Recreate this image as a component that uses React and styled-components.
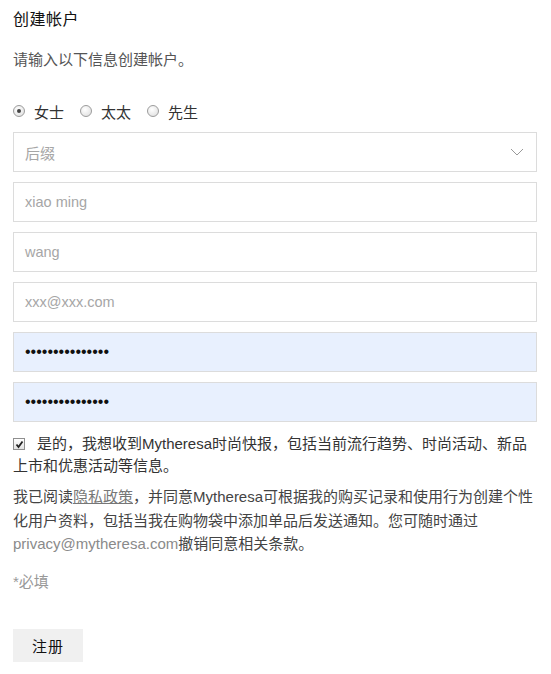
import React, { useState } from 'react';
import styled, { createGlobalStyle } from 'styled-components';

const GlobalStyle = createGlobalStyle`
  body {
    margin: 0;
    background: #fff;
    font-family: "Liberation Sans", "Noto Sans CJK SC", sans-serif;
    color: #333;
  }
`;

const Page = styled.div`
  width: 524px;
  padding: 10px 13px 12px 13px;
`;

const Title = styled.h2`
  margin: 0;
  font-size: 16px;
  font-weight: normal;
  color: #111;
  line-height: 20px;
  letter-spacing: 0.5px;
`;

const Intro = styled.p`
  margin: 20px 0 0;
  font-size: 15px;
  color: #555;
  line-height: 20px;
`;

const RadioRow = styled.div`
  display: flex;
  align-items: center;
  gap: 16px;
  margin-top: 31px;
  height: 20px;
`;

const RadioLabel = styled.label`
  display: flex;
  align-items: center;
  gap: 9px;
  font-size: 15px;
  color: #333;
  cursor: pointer;
`;

const RadioDot = styled.span`
  box-sizing: border-box;
  width: 12px;
  height: 12px;
  border-radius: 50%;
  border: 1px solid #9c9c9c;
  background: radial-gradient(circle at 40% 35%, #fff 0%, #dcdcdc 100%);
  display: flex;
  align-items: center;
  justify-content: center;
  &::after {
    content: '';
    width: 4px;
    height: 4px;
    border-radius: 50%;
    background: ${(p) => (p.$checked ? '#444' : 'transparent')};
  }
`;

const Fields = styled.div`
  display: flex;
  flex-direction: column;
  gap: 10px;
  margin-top: 11px;
`;

const Field = styled.div`
  height: 38px;
  border: 1px solid #dcdcdc;
  background: ${(p) => (p.$filled ? '#e8f0fe' : '#fff')};
  display: flex;
  align-items: center;
  justify-content: space-between;
  padding: 0 12px 0 11px;
  font-size: 14.5px;
  color: #a6a6a6;
`;

const CjkPlaceholder = styled.span`
  font-size: 15px;
`;

const Dots = styled.span`
  font-size: 16px;
  color: #111;
`;

const ConsentRow = styled.div`
  margin-top: 11px;
  font-size: 15px;
  line-height: 22px;
  color: #333;
`;

const CheckBox = styled.span`
  box-sizing: border-box;
  display: inline-flex;
  align-items: center;
  justify-content: center;
  vertical-align: top;
  width: 12px;
  height: 12px;
  margin: 5px 12px 0 0;
  border: 1px solid #8f8f8f;
  background: linear-gradient(#fff, #e2e2e2);
`;

const Legal = styled.p`
  margin: 8px 0 0;
  font-size: 15px;
  line-height: 23.5px;
  color: #444;
`;

const Link = styled.a`
  color: #777;
  text-decoration: underline;
`;

const Mail = styled.span`
  color: #8a8a8a;
  white-space: nowrap;
`;

const Required = styled.p`
  margin: 16px 0 0;
  font-size: 15px;
  color: #999;
  line-height: 20px;
`;

const SubmitButton = styled.button`
  display: block;
  margin-top: 37px;
  width: 70px;
  height: 33px;
  border: none;
  background: #f0f0f0;
  font-family: inherit;
  font-size: 15px;
  color: #111;
  letter-spacing: 1px;
`;

const Chevron = () => (
  <svg width="14" height="8" viewBox="0 0 14 8">
    <polyline points="1,1 7,7 13,1" fill="none" stroke="#999" strokeWidth="1" />
  </svg>
);

const Tick = () => (
  <svg width="9" height="9" viewBox="0 0 9 9">
    <path d="M1.5 4.5 L3.5 7 L7.5 1.5" fill="none" stroke="#222" strokeWidth="1.8" />
  </svg>
);

export default function App() {
  const [title, setTitle] = useState('ms');
  const titles = [
    { id: 'ms', label: '女士' },
    { id: 'mrs', label: '太太' },
    { id: 'mr', label: '先生' },
  ];

  return (
    <>
      <GlobalStyle />
      <Page>
        <Title>创建帐户</Title>
        <Intro>请输入以下信息创建帐户。</Intro>

        <RadioRow>
          {titles.map((t) => (
            <RadioLabel key={t.id} onClick={() => setTitle(t.id)}>
              <RadioDot $checked={title === t.id} />
              {t.label}
            </RadioLabel>
          ))}
        </RadioRow>

        <Fields>
          <Field>
            <CjkPlaceholder>后缀</CjkPlaceholder>
            <Chevron />
          </Field>
          <Field>xiao ming</Field>
          <Field>wang</Field>
          <Field>xxx@xxx.com</Field>
          <Field $filled>
            <Dots>•••••••••••••••</Dots>
          </Field>
          <Field $filled>
            <Dots>•••••••••••••••</Dots>
          </Field>
        </Fields>

        <ConsentRow>
          <CheckBox>
            <Tick />
          </CheckBox>
          是的，我想收到Mytheresa时尚快报，包括当前流行趋势、时尚活动、新品上市和优惠活动等信息。
        </ConsentRow>

        <Legal>
          我已阅读<Link href="#">隐私政策</Link>，并同意Mytheresa可根据我的购买记录和使用行为创建个性
          <br />
          化用户资料，包括当我在购物袋中添加单品后发送通知。您可随时通过
          <Mail>privacy@mytheresa.com</Mail>撤销同意相关条款。
        </Legal>

        <Required>*必填</Required>

        <SubmitButton>注册</SubmitButton>
      </Page>
    </>
  );
}
